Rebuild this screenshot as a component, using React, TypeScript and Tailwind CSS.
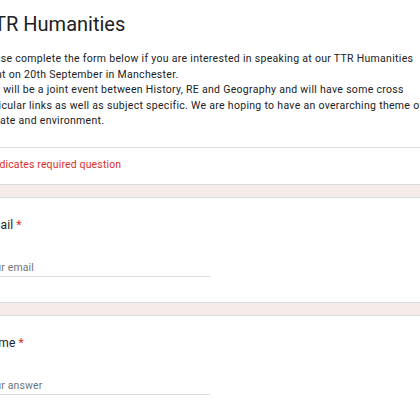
import React from "react";

const descLines = [
  "Please complete the form below if you are interested in speaking at our TTR Humanities",
  "event on 20th September in Manchester.",
  "This will be a joint event between History, RE and Geography and will have some cross",
  "curricular links as well as subject specific. We are hoping to have an overarching theme of",
  "climate and environment.",
];

function Question({ label, placeholder }: { label: string; placeholder: string }) {
  return (
    <div className="bg-white border border-[#dadce0] px-[18px] pt-[18px] pb-[25px]">
      {/* Question title */}
      <div className="text-[12px] leading-[18px] text-[#202124] tracking-[0.1px]">
        {label} <span className="text-[#d93025]">*</span>
      </div>
      {/* Answer field */}
      <div className="mt-[26px] w-[227px] border-b border-[#dadce0] text-[10.5px] leading-[16px] text-[#70757a] tracking-[0.15px]">
        {placeholder}
      </div>
    </div>
  );
}

export default function App() {
  return (
    <div className="w-[420px] h-[420px] overflow-hidden bg-[#f5ebe9] font-['Roboto',sans-serif]">
      <div className="-ml-[36px] w-[520px] flex flex-col gap-3">
        {/* Header card */}
        <div className="bg-white border border-t-0 border-[#dadce0]">
          <div className="px-[18px] pt-[8px] pb-[18px] border-b border-[#dadce0]">
            <h1 className="-ml-[1px] text-[20px] leading-[32px] text-[#202124]">TTR Humanities</h1>
            <div className="-ml-[4px] mt-[11px] text-[10.5px] leading-[15.5px] text-[#202124] tracking-[0.3px]">
              {descLines.map((l) => (
                <div key={l} className="whitespace-nowrap">
                  {l}
                </div>
              ))}
            </div>
          </div>
          <div className="px-[18px] pt-[9px] pb-[11px] text-[10.5px] leading-[16px] text-[#d93025] tracking-[0.15px]">
            * Indicates required question
          </div>
        </div>

        <Question label="Email" placeholder="Your email" />
        <Question label="Name" placeholder="Your answer" />
      </div>
    </div>
  );
}
